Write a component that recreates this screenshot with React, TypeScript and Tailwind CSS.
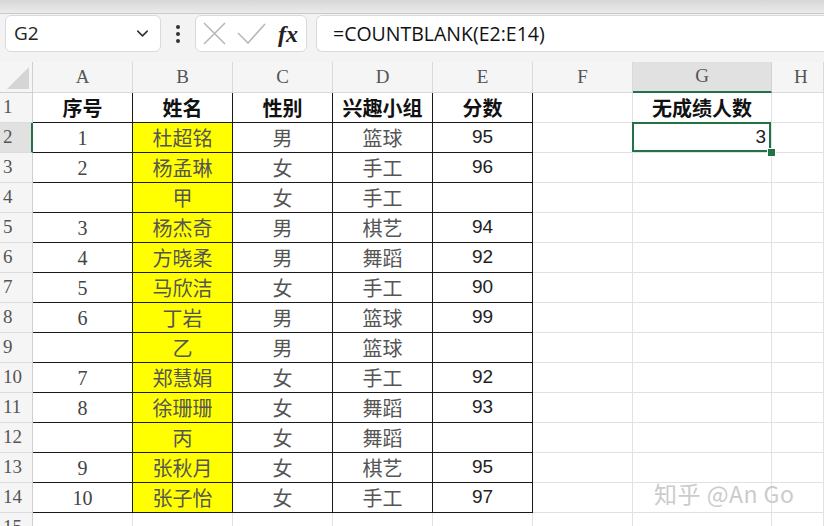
import { ChevronDown } from "lucide-react";

type Row = [string, string, string, string, string];

// A1:E14 — the score sheet
const ROWS: Row[] = [
  ["1", "杜超铭", "男", "篮球", "95"],
  ["2", "杨孟琳", "女", "手工", "96"],
  ["", "甲", "女", "手工", ""],
  ["3", "杨杰奇", "男", "棋艺", "94"],
  ["4", "方晓柔", "男", "舞蹈", "92"],
  ["5", "马欣洁", "女", "手工", "90"],
  ["6", "丁岩", "男", "篮球", "99"],
  ["", "乙", "男", "篮球", ""],
  ["7", "郑慧娟", "女", "手工", "92"],
  ["8", "徐珊珊", "女", "舞蹈", "93"],
  ["", "丙", "女", "舞蹈", ""],
  ["9", "张秋月", "女", "棋艺", "95"],
  ["10", "张子怡", "女", "手工", "97"],
];

const HEAD = ["序号", "姓名", "性别", "兴趣小组", "分数"];
const COLS = ["A", "B", "C", "D", "E", "F", "G", "H"];

const GRID =
  "grid grid-cols-[33px_100px_100px_100px_100px_100px_100px_139px_1fr]";
const CJK = "font-['Noto_Sans_CJK_SC',sans-serif]";
const SERIF = "font-['Liberation_Serif','Noto_Sans_CJK_SC',serif]";

function RowHeader({ n, active }: { n: number; active?: boolean }) {
  return (
    <div
      className={`flex h-[30px] items-center pl-[3px] text-[19px] text-[#555] ${SERIF} border-b border-[#dcdcdc] ${
        active
          ? "bg-[#e1e1e1] border-r-2 border-r-[#217346]"
          : "bg-[#f5f5f5] border-r border-r-[#d0d0d0]"
      }`}
    >
      {n}
    </div>
  );
}

function Cell({
  children,
  table,
  className = "",
}: {
  children?: React.ReactNode;
  table?: boolean;
  className?: string;
}) {
  return (
    <div
      className={`relative flex h-[30px] items-center justify-center ${
        table
          ? "border-r border-b border-[#1a1a1a]"
          : "border-r border-b border-[#e1e1e1]"
      } ${className}`}
    >
      {children}
    </div>
  );
}

export default function App() {
  return (
    <div className="relative h-[526px] w-[824px] overflow-hidden bg-white">
      {/* ribbon edge */}
      <div className="h-[14px] border-b border-[#c9c9c9] bg-gradient-to-b from-[#d6d6d6] to-[#ebebeb]" />

      {/* formula bar */}
      <div className="flex h-[48px] items-start bg-[#f3f3f3] pt-[1px]">
        <div className="ml-[5px] flex h-[37px] w-[156px] items-center justify-between rounded-[6px] border border-[#dadada] bg-white pl-[8px] pr-[8px] font-['Open_Sans',sans-serif] text-[19px] text-[#222]">
          <span>G2</span>
          <ChevronDown className="size-[19px] text-[#333]" strokeWidth={2} />
        </div>
        <div className="flex h-[37px] w-[34px] flex-col items-center justify-center gap-[3px]">
          <span className="block size-[4px] rounded-full bg-[#333]" />
          <span className="block size-[4px] rounded-full bg-[#333]" />
          <span className="block size-[4px] rounded-full bg-[#333]" />
        </div>
        <div className="flex h-[37px] w-[112px] items-center rounded-[6px] border border-[#dadada] bg-white pl-[7px]">
          {/* cancel */}
          <svg width="23" height="23" viewBox="0 0 23 23" className="shrink-0">
            <path d="M1 1 22 22M22 1 1 22" stroke="#b8b8b8" strokeWidth="1.6" fill="none" />
          </svg>
          {/* enter */}
          <svg width="29" height="21" viewBox="0 0 29 21" className="ml-[11px] shrink-0">
            <path d="M1 10 11 20 28 1" stroke="#b8b8b8" strokeWidth="1.6" fill="none" />
          </svg>
          <span className="ml-[12px] font-['Liberation_Serif',serif] text-[24px] font-bold italic leading-none text-[#222]">
            fx
          </span>
        </div>
        <div className="ml-[9px] flex h-[37px] flex-1 items-center rounded-l-[6px] border border-r-0 border-[#dadada] bg-white pl-[16px] font-['Open_Sans',sans-serif] text-[19.5px] text-[#111]">
          =COUNTBLANK(E2:E14)
        </div>
      </div>

      {/* column headers */}
      <div className={`${GRID} h-[31px] bg-[#f5f5f5]`}>
        <div className="flex items-end justify-end border-r border-b border-[#d0d0d0] pb-[3px] pr-[3px]">
          <svg width="22" height="22" viewBox="0 0 22 22">
            <polygon points="22,0 22,22 0,22" fill="#d5d5d5" />
          </svg>
        </div>
        {COLS.map((c) => (
          <div
            key={c}
            className={`flex items-center justify-center text-[19px] text-[#555] ${SERIF} ${
              c === "G"
                ? "bg-[#e1e1e1] border-r border-r-[#d0d0d0] border-b-2 border-b-[#217346]"
                : "border-r border-b border-[#d9d9d9]"
            } ${c === "H" ? "justify-start pl-[22px]" : ""}`}
          >
            {c}
          </div>
        ))}
      </div>

      {/* row 1 */}
      <div className={GRID}>
        <RowHeader n={1} />
        {HEAD.map((h) => (
          <Cell key={h} table className={`text-[20px] font-bold text-[#111] ${CJK}`}>
            {h}
          </Cell>
        ))}
        <Cell />
        <Cell className={`text-[20px] font-bold text-[#111] ${CJK}`}>无成绩人数</Cell>
        <Cell />
      </div>

      {ROWS.map((r, i) => {
        const n = i + 2;
        return (
          <div key={n} className={GRID}>
            <RowHeader n={n} active={n === 2} />
            <Cell table className={`text-[20px] text-[#444] ${SERIF}`}>
              {r[0]}
            </Cell>
            <Cell table className={`bg-[#ffff00] text-[20px] text-[#555] ${CJK}`}>
              {r[1]}
            </Cell>
            <Cell table className={`text-[20px] text-[#555] ${CJK}`}>
              {r[2]}
            </Cell>
            <Cell table className={`text-[20px] text-[#555] ${CJK}`}>
              {r[3]}
            </Cell>
            <Cell table className="font-['Liberation_Sans',sans-serif] text-[19px] text-[#222]">
              {r[4]}
            </Cell>
            <Cell />
            {n === 2 ? (
              <Cell className="z-10 justify-end pr-[5px] font-['Liberation_Sans',sans-serif] text-[19px] text-[#222]">
                3
                {/* active cell outline + fill handle */}
                <div className="pointer-events-none absolute -left-px -top-px bottom-0 right-0 border-2 border-[#217346]" />
                <div className="absolute -bottom-[5px] -right-[5px] size-[9px] border border-white bg-[#217346]" />
              </Cell>
            ) : (
              <Cell />
            )}
            <Cell />
          </div>
        );
      })}

      {/* row 15 */}
      <div className={GRID}>
        <RowHeader n={15} />
        {COLS.map((c) => (
          <Cell key={c} />
        ))}
      </div>

      {/* watermark */}
      <div className="pointer-events-none absolute left-[654px] top-[476px] font-['Noto_Sans_CJK_SC',sans-serif] text-[23px] tracking-[0.5px] text-[#cbcbcb]">
        知乎 @An Go
      </div>
    </div>
  );
}
